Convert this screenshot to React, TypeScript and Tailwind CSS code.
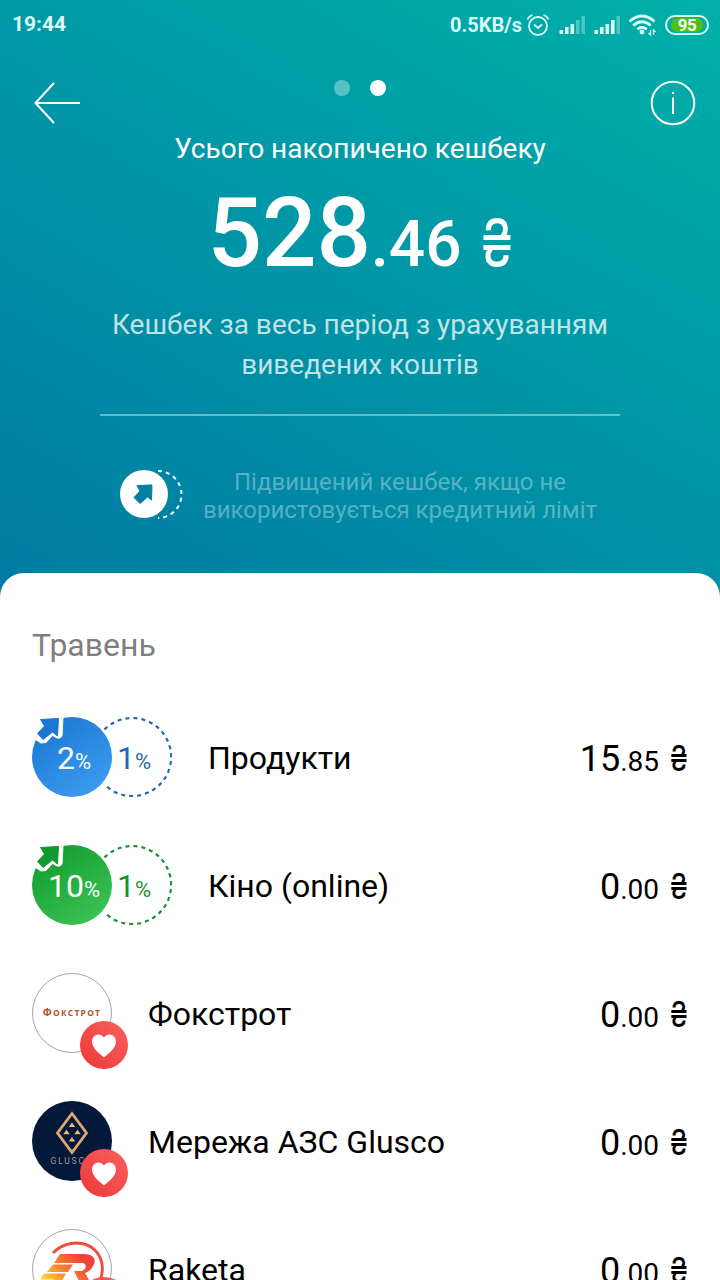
import { useId } from "react";

type Amount = { whole: string; cents: string };

const boosted = [
  {
    name: "Продукти",
    high: "2",
    low: "1",
    from: "#1976d2",
    to: "#3d9cf0",
    text: "text-[#2468b4]",
    amount: { whole: "15", cents: "85" },
  },
  {
    name: "Кіно (online)",
    high: "10",
    low: "1",
    from: "#109a2c",
    to: "#3cc455",
    text: "text-[#1d8f33]",
    amount: { whole: "0", cents: "00" },
  },
];

const partners = [
  { name: "Фокстрот", logo: <FoxtrotLogo /> },
  { name: "Мережа АЗС Glusco", logo: <GluscoLogo /> },
  { name: "Raketa", logo: <RaketaLogo /> },
];

function StatusBar() {
  return (
    <div className="flex h-12 shrink-0 items-center justify-between pl-3 pr-[11px] pt-px text-[#d9fbf8]">
      <span className="text-[21px] font-bold">19:44</span>
      <div className="flex items-center">
        <span className="mr-1 text-[20px] font-bold">0.5KB/s</span>
        <svg width="24" height="24" viewBox="0 0 24 24" fill="none" stroke="currentColor" strokeWidth="1.800">
          <circle cx="12" cy="13" r="9" />
          <path d="M8 11.5l4 3.5 4-3.5M1.5 6.5Q3 3 6.500 2M22.500 6.500Q21 3 17.500 2" />
        </svg>
        <SignalIcon level={3} />
        <SignalIcon level={4} />
        <svg className="ml-2" width="30" height="24" viewBox="0 0 30 24" fill="none" stroke="currentColor" strokeWidth="2.700">
          <path d="M1.500 8.500Q14 -2.500 26.500 8.500M5.300 12.500Q14 5 22.700 12.500M9.300 16.300Q14 12.500 18.700 16.300" />
          <circle cx="14" cy="19" r="2.400" fill="currentColor" stroke="none" />
          <path d="M22.500 17v5l-2-2M25.500 22v-5l2 2" strokeWidth="1.300" />
        </svg>
        <div className="ml-[7px] flex h-5 w-11 items-center rounded-full border-2 border-current px-1">
          <div className="h-3.5 w-full rounded-full bg-[#54bd12] text-center text-[17px] font-bold leading-[14px] tracking-[-0.5px] text-[#f0fff0]">
            95
          </div>
        </div>
      </div>
    </div>
  );
}

function SignalIcon({ level }: { level: number }) {
  const heights = [4, 7, 10, 14, 18];
  return (
    <svg className="ml-[9px]" width="26" height="20" viewBox="0 0 26 20" fill="currentColor">
      {heights.map((h, i) => (
        <rect key={h} x={i * 5.500 + 0.500} y={19 - h} width="3.600" height={h} rx="0.500" opacity={i < level ? 1 : 0.35} />
      ))}
    </svg>
  );
}

function FoxtrotLogo() {
  return (
    <div className="flex size-20 items-baseline justify-center rounded-full border border-[#a5a5a5] bg-white pt-[33px] font-['Open_Sans',sans-serif] text-[8.5px] font-bold leading-none tracking-[1.2px] text-[#b9502f]">
      <span className="text-[10.5px] leading-none">Ф</span>ОКСТРОТ
    </div>
  );
}

function GluscoLogo() {
  return (
    <div className="flex size-20 flex-col items-center rounded-full bg-[#04183a] pt-[10px]">
      <svg width="34" height="44" viewBox="0 0 34 44">
        <path d="M17 2.500L31.500 22 17 41.500 2.500 22z" fill="none" stroke="#dfaa6d" strokeWidth="2.800" />
        <path d="M17 11.500l3.300 4.500h-6.600zM17 26l3.300 4.500h-6.600zM11.500 18.700l3.300 4.500h-6.600zM22.500 18.700l3.300 4.500h-6.600z" fill="#e8b678" />
      </svg>
      <span className="mt-0.5 text-[8.5px] leading-none tracking-[1.8px] text-[#9b9896]">GLUSCO</span>
    </div>
  );
}

function RaketaLogo() {
  return (
    <div className="size-20 overflow-hidden rounded-full border border-[#a5a5a5] bg-white">
      <svg width="78" height="78" viewBox="0 0 78 78">
        <defs>
          <linearGradient id="raketa" gradientUnits="userSpaceOnUse" x1="12" y1="56" x2="46" y2="26">
            <stop offset="0" stopColor="#ffe338" />
            <stop offset="0.500" stopColor="#fa8732" />
            <stop offset="1" stopColor="#f34336" />
          </linearGradient>
        </defs>
        <path d="M20 23C35 7 65 10 69 34c2 14-5 25-16 31" fill="none" stroke="#f4483a" strokeWidth="2.800" />
        <path
          d="M27 24h24c10 0 13 6 9 12-2 4-5 6-8 7l8 14H49l-8-16h7c5 0 7-8 1-8H21zM20 34.500h20l-5 7.500H14zM11 43.500h22l-8 14h-9l5-8H7z"
          fill="url(#raketa)"
        />
      </svg>
    </div>
  );
}

function HeartBadge() {
  return (
    <div className="absolute -right-4 -bottom-4 flex size-12 items-center justify-center rounded-full bg-linear-to-tr from-[#ee3535] to-[#fa6060]">
      <svg className="mt-0.5" width="24" height="24" viewBox="0 0 24 24" fill="#fff">
        <path d="M12 23.500C9 20.500 0 15 0 7.500C0 3.500 3 .5 6.500 .5C9 .5 11 1.800 12 3.800C13 1.800 15 .5 17.500 .5C21 .5 24 3.500 24 7.500C24 15 15 20.500 12 23.500z" />
      </svg>
    </div>
  );
}

function RateBadge({ high, low, from, to, text }: { high: string; low: string; from: string; to: string; text: string }) {
  const id = useId();
  return (
    <div className={`relative h-20 w-[140px] ${text}`}>
      <svg width="140" height="80" viewBox="0 0 140 80">
        <defs>
          <linearGradient id={id} x1="0.100" y1="0" x2="0.800" y2="1">
            <stop offset="0" stopColor={from} />
            <stop offset="1" stopColor={to} />
          </linearGradient>
        </defs>
        <path d="M72.500 12.500A39 39 0 1 1 72.500 67.500" fill="none" stroke="currentColor" strokeWidth="2.200" strokeDasharray="4 4" />
        <circle cx="40" cy="40" r="40" fill={`url(#${id})`} />
        {/* White notch around the corner arrow */}
        <path d="M0 0H31L30 19L28 21H25L20.500 18.500L14 25.500L9 26L3 22L0 26z" fill="#fff" stroke="#fff" strokeLinejoin="round" />
        <path d="M8.500 2.500L26.500 1.500L25.500 19L20.500 15L11 22.500L5.500 16.500L12.500 9z" fill={from} stroke={from} strokeLinejoin="round" />
      </svg>
      <div className="absolute left-0 top-[21px] w-[84px] text-center text-[32px] leading-10 text-white">
        {high}
        <span className="text-[22px]">%</span>
      </div>
      <div className="absolute left-[85px] top-[21px] text-[32px] leading-10">
        {low}
        <span className="text-[22px]">%</span>
      </div>
    </div>
  );
}

function Price({ whole, cents }: Amount) {
  return (
    <span className="ml-auto mt-1.5 flex items-baseline text-[36px] leading-10">
      {whole}
      <span className="text-[28px]">.{cents}</span>
      <span className="w-[29px] origin-right scale-x-80 text-right font-['Inter',sans-serif] text-[36px] leading-10">₴</span>
    </span>
  );
}

export default function App() {
  return (
    <div className="flex h-[1280px] w-[720px] flex-col overflow-hidden bg-[linear-gradient(210deg,#00b0a9_0px,#007aa3_870px)] font-[Roboto,sans-serif]">
      <StatusBar />

      {/* Top navigation */}
      <div className="flex h-20 shrink-0 justify-between px-6 pt-8 text-white">
        <svg className="ml-2.5" width="48" height="46" viewBox="0 0 48 46" fill="none" stroke="currentColor" strokeWidth="2">
          <path d="M46 23H2M20 3L1.500 23L20 43" />
        </svg>
        <div className="mr-[13px] flex gap-5">
          <span className="size-4 rounded-full bg-white/35" />
          <span className="size-4 rounded-full bg-white" />
        </div>
        <svg width="46" height="46" viewBox="0 0 46 46" fill="none" stroke="currentColor" strokeWidth="2">
          <circle cx="23" cy="23" r="21.300" />
          <path d="M23 17.500V34M23 12v2" />
        </svg>
      </div>

      {/* Total */}
      <div className="flex h-[445px] shrink-0 flex-col items-center pt-px text-white">
        <h1 className="text-[28px] leading-10">Усього накопичено кешбеку</h1>
        <div className="mt-2 flex h-[112px] items-baseline text-[96px] font-medium leading-[112px]">
          528
          <span className="text-[64px]">.46</span>
          <span className="w-[51px] origin-right scale-x-80 text-right font-['Inter',sans-serif] text-[64px] font-normal leading-[64px]">
            ₴
          </span>
        </div>
        <p className="mt-4 w-[540px] text-center text-[28px] leading-10 text-white/75">
          Кешбек за весь період з урахуванням виведених коштів
        </p>
        <div className="mt-[29px] h-0.5 w-[520px] shrink-0 bg-white/40" />
        <div className="mt-[52px] flex w-[480px] items-center justify-between">
          <svg className="-mt-1" width="64" height="50" viewBox="0 0 64 50">
            <path d="M38 2A23.500 23.500 0 0 1 38 49" fill="none" stroke="#fff" strokeWidth="2" strokeDasharray="4 4" />
            <circle cx="24" cy="25" r="24" fill="#fff" />
            <path d="M17 16.500L32 16L31.500 31L27.500 28L20 34.500L14 28.500L20 22z" fill="#007f9f" stroke="#007f9f" strokeLinejoin="round" />
          </svg>
          <p className="w-[400px] whitespace-nowrap text-center text-[24px] leading-7 text-white/35">
            Підвищений кешбек, якщо не
            <br />
            використовується кредитний ліміт
          </p>
        </div>
      </div>

      {/* Monthly list */}
      <div className="h-[707px] shrink-0 rounded-t-3xl bg-white px-8 pt-[52px] text-black">
        <h2 className="mb-[28px] text-[32px] leading-10 text-[#7f7f7f]">Травень</h2>
        {boosted.map(({ name, amount, ...rate }) => (
          <div key={name} className="flex h-32 items-center">
            <RateBadge {...rate} />
            <span className="ml-9 mt-0.5 text-[32px] leading-10">{name}</span>
            <Price {...amount} />
          </div>
        ))}
        {partners.map(({ name, logo }) => (
          <div key={name} className="flex h-32 items-center">
            <div className="relative">
              {logo}
              <HeartBadge />
            </div>
            <span className="ml-9 mt-0.5 text-[32px] leading-10">{name}</span>
            <Price whole="0" cents="00" />
          </div>
        ))}
      </div>
    </div>
  );
}
